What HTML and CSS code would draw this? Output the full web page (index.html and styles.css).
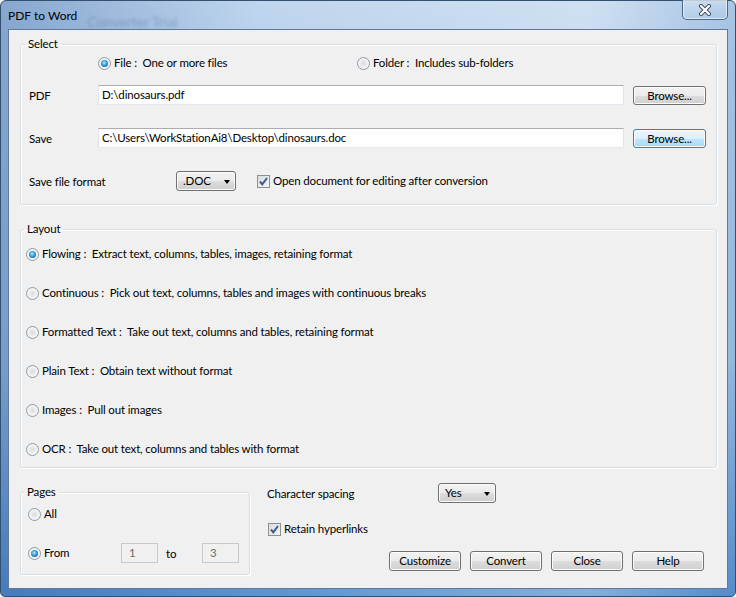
FILE: index.html
```html
<!DOCTYPE html>
<html>
<head>
<meta charset="utf-8">
<title>PDF to Word</title>
<link rel="stylesheet" href="styles.css">
</head>
<body>
<div class="window">
  <div class="titlebar">
    <span class="title">PDF to Word</span>
    <span class="ghost">Converter Trial</span>
    <div class="close-btn">
      <svg width="14" height="12" viewBox="0 0 14 12">
        <path d="M3 2 L11 10 M11 2 L3 10" stroke="#3c4a5c" stroke-width="4" stroke-linecap="round"/>
        <path d="M3 2 L11 10 M11 2 L3 10" stroke="#ffffff" stroke-width="2.2" stroke-linecap="round"/>
      </svg>
    </div>
  </div>
  <div class="client">
    <fieldset class="group select-group">
      <legend>Select</legend>
      <div class="mode-row">
        <label class="opt file-opt"><span class="radio checked"></span>File :&nbsp; One or more files</label>
        <label class="opt"><span class="radio"></span>Folder :&nbsp; Includes sub-folders</label>
      </div>
      <div class="path-row first">
        <span class="lbl">PDF</span>
        <div class="textbox">D:\dinosaurs.pdf</div>
        <div class="btn">Browse...</div>
      </div>
      <div class="path-row">
        <span class="lbl">Save</span>
        <div class="textbox">C:\Users\WorkStationAi8\Desktop\dinosaurs.doc</div>
        <div class="btn focused">Browse...</div>
      </div>
      <div class="format-row">
        <span class="lbl wide">Save file format</span>
        <div class="combo fmt">.DOC<span class="arrow"></span></div>
        <label class="opt check-opt"><span class="checkbox"><svg width="11" height="11" viewBox="0 0 11 11"><path d="M2 5.5 L4.3 8.3 L9 2" fill="none" stroke="#3b5a96" stroke-width="2"/></svg></span>Open document for editing after conversion</label>
      </div>
    </fieldset>

    <fieldset class="group layout-group">
      <legend>Layout</legend>
      <label class="opt lrow"><span class="radio checked"></span>Flowing :&nbsp; Extract text, columns, tables, images, retaining format</label>
      <label class="opt lrow"><span class="radio"></span>Continuous :&nbsp; Pick out text, columns, tables and images with continuous breaks</label>
      <label class="opt lrow"><span class="radio"></span>Formatted Text :&nbsp; Take out text, columns and tables, retaining format</label>
      <label class="opt lrow"><span class="radio"></span>Plain Text :&nbsp; Obtain text without format</label>
      <label class="opt lrow"><span class="radio"></span>Images :&nbsp; Pull out images</label>
      <label class="opt lrow"><span class="radio"></span>OCR :&nbsp; Take out text, columns and tables with format</label>
    </fieldset>

    <div class="bottom">
      <fieldset class="group pages-group">
        <legend>Pages</legend>
        <label class="opt prow"><span class="radio"></span>All</label>
        <div class="prow from-row">
          <label class="opt from-opt"><span class="radio checked"></span>From</label>
          <div class="textbox disabled">1</div>
          <span class="to">to</span>
          <div class="textbox disabled">3</div>
        </div>
      </fieldset>
      <div class="right-col">
        <div class="spacing-row">
          <span class="spacing-lbl">Character spacing</span>
          <div class="combo yes">Yes<span class="arrow"></span></div>
        </div>
        <label class="opt link-opt"><span class="checkbox"><svg width="11" height="11" viewBox="0 0 11 11"><path d="M2 5.5 L4.3 8.3 L9 2" fill="none" stroke="#3b5a96" stroke-width="2"/></svg></span>Retain hyperlinks</label>
        <div class="buttons">
          <div class="btn">Customize</div>
          <div class="btn">Convert</div>
          <div class="btn">Close</div>
          <div class="btn">Help</div>
        </div>
      </div>
    </div>
  </div>
</div>
</body>
</html>
```
FILE: styles.css
```css
* { box-sizing: border-box; }
html, body { margin: 0; padding: 0; }
body {
  width: 736px;
  height: 597px;
  overflow: hidden;
  font-family: Lato, "Noto Sans", sans-serif;
  font-size: 11.5px;
  letter-spacing: -0.15px;
  color: #000;
  background: #fff;
}
.window {
  width: 736px;
  height: 597px;
  border: 1px solid #34506f;
  border-radius: 6px 6px 5px 5px;
  padding: 0 7px 7px 7px;
  display: flex;
  flex-direction: column;
  background:
    linear-gradient(to right, rgba(30, 80, 150, 0.35), rgba(30, 80, 150, 0) 35%, rgba(255, 255, 255, 0.25) 80%, rgba(40, 100, 170, 0.15)),
    linear-gradient(to bottom, #c0d6ee 0, #b9d2ec 40px, #a6c6e7 60%, #5a93cf 100%);
}
.titlebar {
  height: 28px;
  display: flex;
  align-items: flex-start;
}
.title {
  font-size: 12px;
  letter-spacing: 0;
  line-height: 14px;
  margin-top: 8px;
  color: #000;
}
.ghost {
  margin-left: 10px;
  margin-top: 14px;
  font-size: 14px;
  letter-spacing: 0;
  line-height: 14px;
  color: rgba(80, 105, 140, 0.38);
  filter: blur(1.4px);
}
.close-btn {
  margin-left: auto;
  margin-top: -1px;
  width: 46px;
  height: 20px;
  border: 1px solid #4f6580;
  border-top: none;
  border-radius: 0 0 5px 5px;
  background: linear-gradient(to bottom, rgba(255,255,255,0.35), rgba(255,255,255,0.15) 50%, rgba(180,210,240,0.3));
  box-shadow: inset 0 0 0 1px rgba(255,255,255,0.55);
  display: flex;
  align-items: center;
  justify-content: center;
}
.client {
  flex: 1;
  background: #f0f0f0;
  border: 1px solid #62789a;
  padding: 6px 10px 0 11px;
}
.group {
  margin: 0;
  border: 1px solid #d5dfe5;
  border-radius: 3px;
  box-shadow: inset 1px 1px 0 #fff, 1px 1px 0 #fff;
}
.group legend {
  padding: 0 3px;
  line-height: 16px;
}
.opt {
  display: flex;
  align-items: center;
  white-space: nowrap;
  line-height: 20px;
  height: 20px;
}
.radio {
  width: 13px;
  height: 13px;
  border-radius: 50%;
  border: 1px solid #8e9aa6;
  background: radial-gradient(circle at 50% 50%, #dcdcdc 0, #f2f2f2 55%, #fafafa 100%);
  box-shadow: inset 0 0 0 1px #f4f4f4;
  margin-right: 3px;
  flex: none;
  display: flex;
  align-items: center;
  justify-content: center;
}
.radio.checked::after {
  content: "";
  width: 7px;
  height: 7px;
  border-radius: 50%;
  background: radial-gradient(circle at 45% 40%, #b6ecff 0, #3da6de 40%, #1a5c91 85%);
}
.checkbox {
  width: 13px;
  height: 13px;
  border: 1px solid #8e8f8f;
  background: linear-gradient(135deg, #dadbdc, #f6f6f6);
  margin-right: 3px;
  flex: none;
  display: flex;
  align-items: center;
  justify-content: center;
}
.checkbox svg { display: block; }

/* Select group */
.select-group { padding: 1px 10px 13px 8px; }
.select-group legend { margin-left: -4px; }
.mode-row {
  display: flex;
  height: 20px;
  padding-left: 69px;
}
.file-opt { width: 259px; }
.path-row {
  display: flex;
  align-items: flex-end;
  height: 20px;
  margin-top: 23px;
}
.path-row.first { margin-top: 12px; }
.lbl {
  width: 69px;
  flex: none;
  align-self: center;
}
.lbl.wide { width: 147px; }
.textbox {
  height: 20px;
  line-height: 18px;
  padding: 0 3px;
  background: #fff;
  border: 1px solid #e2e3ea;
  border-top-color: #abadb3;
  border-bottom-color: #e3e9ef;
  white-space: nowrap;
  overflow: hidden;
}
.path-row .textbox { flex: 1; }
.btn {
  height: 20px;
  width: 72px;
  text-align: center;
  line-height: 18px;
  border: 1px solid #707070;
  border-radius: 3px;
  background: linear-gradient(to bottom, #f2f2f2 0, #ebebeb 50%, #dddddd 51%, #cfcfcf 100%);
  box-shadow: inset 0 0 0 1px #fcfcfc;
  flex: none;
}
.path-row .btn {
  margin-left: 9px;
  width: 73px;
  height: 19px;
  line-height: 17px;
}
.btn.focused {
  border-color: #3c7fb1;
  background: linear-gradient(to bottom, #eaf6fd 0, #d9f0fc 50%, #bee6fd 51%, #a7d9f5 100%);
}
.format-row {
  display: flex;
  align-items: center;
  height: 20px;
  margin-top: 23px;
}
.combo {
  position: relative;
  height: 20px;
  line-height: 18px;
  padding-left: 6px;
  border: 1px solid #707070;
  border-radius: 3px;
  background: linear-gradient(to bottom, #f2f2f2 0, #ebebeb 50%, #dddddd 51%, #cfcfcf 100%);
  box-shadow: inset 0 0 0 1px #fcfcfc;
  flex: none;
}
.combo .arrow {
  position: absolute;
  right: 5px;
  top: 8px;
  width: 0;
  height: 0;
  border-left: 3.5px solid transparent;
  border-right: 3.5px solid transparent;
  border-top: 4px solid #000;
}
.fmt { width: 60px; }
.check-opt { margin-left: 21px; }

/* Layout group */
.layout-group {
  margin-top: 16px;
  padding: 7px 10px 8px 5px;
  display: flex;
  flex-direction: column;
  gap: 19px;
}
.layout-group legend { margin-left: -2px; }

/* Bottom */
.bottom {
  display: flex;
  align-items: flex-start;
  margin-top: 15px;
}
.pages-group {
  margin-top: 1px;
  width: 230px;
  padding: 4px 0 11px 7px;
  display: flex;
  flex-direction: column;
  gap: 19px;
}
.pages-group legend { margin-left: -4px; }
.prow { height: 20px; }
.from-row {
  display: flex;
  align-items: center;
}
.from-opt { width: 93px; }
.textbox.disabled {
  width: 37px;
  background: #f0f0f0;
  border: 1px solid #c9c9c9;
  color: #6d6d6d;
  padding-left: 7px;
  line-height: 18px;
}
.to {
  width: 44px;
  padding-left: 8px;
}
.right-col {
  margin-left: 17px;
  flex: 1;
  display: flex;
  flex-direction: column;
  padding-right: 13px;
}
.spacing-row {
  display: flex;
  align-items: center;
  height: 20px;
}
.spacing-lbl { width: 171px; }
.yes { width: 58px; }
.link-opt {
  margin-top: 16px;
  margin-left: 1px;
}
.buttons {
  display: flex;
  justify-content: flex-end;
  gap: 9px;
  margin-top: 12px;
}
.buttons .btn { height: 20px; }
```
